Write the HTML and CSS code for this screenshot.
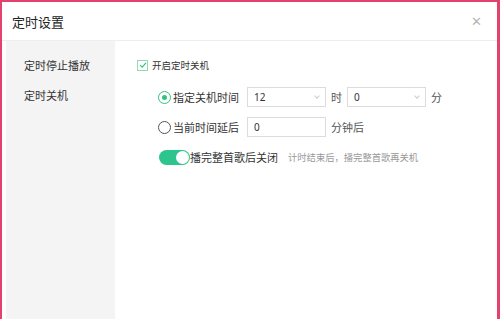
FILE: index.html
```html
<!DOCTYPE html>
<html lang="zh-CN">
<head>
    <meta charset="UTF-8">
    <meta name="viewport" content="width=device-width, initial-scale=1.0">
    <title>定时设置</title>
    <link rel="stylesheet" href="styles.css">
</head>
<body>
    <div class="dialog">
        <header class="dialog-head">
            <h1>定时设置</h1>
            <span class="close">&#x2715;</span>
        </header>
        <div class="dialog-body">
            <nav class="side">
                <a class="side-item">定时停止播放</a>
                <a class="side-item">定时关机</a>
            </nav>
            <div class="main">
                <label class="check-row">
                    <span class="checkbox">
                        <svg width="8" height="8" viewBox="0 0 8 8"><path d="M1 4.2 L3.2 6.2 L7 1.8" fill="none" stroke="#31c27c" stroke-width="1.1"/></svg>
                    </span>
                    开启定时关机
                </label>
                <div class="options">
                    <div class="opt-row">
                        <span class="radio on"></span>
                        <span class="opt-label">指定关机时间</span>
                        <div class="select"><span>12</span><i class="arrow"></i></div>
                        <span class="unit">时</span>
                        <div class="select"><span>0</span><i class="arrow"></i></div>
                        <span class="unit">分</span>
                    </div>
                    <div class="opt-row">
                        <span class="radio"></span>
                        <span class="opt-label">当前时间延后</span>
                        <div class="select"><span>0</span></div>
                        <span class="unit">分钟后</span>
                    </div>
                    <div class="opt-row">
                        <span class="toggle"><i></i></span>
                        <span class="opt-label">播完整首歌后关闭</span>
                        <span class="hint">计时结束后，播完整首歌再关机</span>
                    </div>
                </div>
            </div>
        </div>
    </div>
</body>
</html>
```

FILE: styles.css
```css
body {
    margin: 0;
    padding: 0;
    font-family: "Noto Sans CJK SC", "Noto Sans", sans-serif;
    color: #333;
    background-color: #fff;
}
.dialog {
    width: 500px;
    height: 319px;
    box-sizing: border-box;
    border: 2px solid #e4416f;
    border-right-width: 3px;
    border-bottom: none;
    display: flex;
    flex-direction: column;
    background-color: #fff;
}
.dialog-head {
    height: 38px;
    border-bottom: 1px solid #eee;
    display: flex;
    align-items: center;
    justify-content: space-between;
    padding: 0 15px 0 10px;
}
.dialog-head h1 {
    margin: 0;
    font-size: 13px;
    font-weight: normal;
    color: #222;
}
.close {
    color: #b5b5b5;
    font-size: 13px;
    margin-top: -2px;
}
.dialog-body {
    flex: 1;
    display: flex;
    padding-left: 4px;
}
.side {
    width: 109px;
    background-color: #f4f4f4;
    display: flex;
    flex-direction: column;
    padding-top: 9px;
}
.side-item {
    font-size: 11px;
    line-height: 30px;
    padding-left: 18px;
    color: #333;
}
.main {
    flex: 1;
    padding: 16px 0 0 22px;
}
.check-row {
    display: flex;
    align-items: center;
    font-size: 9.5px;
    color: #333;
    height: 16px;
}
.checkbox {
    width: 9px;
    height: 9px;
    border: 1px solid #8fd9b6;
    display: flex;
    align-items: center;
    justify-content: center;
    margin-right: 4px;
}
.options {
    padding: 14px 0 0 21px;
    display: flex;
    flex-direction: column;
    gap: 10px;
}
.opt-row {
    display: flex;
    align-items: center;
    height: 20px;
}
.radio {
    width: 11px;
    height: 11px;
    border: 1px solid #555;
    border-radius: 50%;
    box-sizing: content-box;
    margin-right: 2px;
    position: relative;
}
.radio.on {
    border-color: #31c27c;
}
.radio.on::after {
    content: "";
    position: absolute;
    left: 3px;
    top: 3px;
    width: 5px;
    height: 5px;
    border-radius: 50%;
    background-color: #31c27c;
}
.opt-label {
    font-size: 11px;
    color: #333;
    width: 74px;
}
.select {
    width: 79px;
    height: 20px;
    box-sizing: border-box;
    border: 1px solid #dcdcdc;
    display: flex;
    align-items: center;
    justify-content: space-between;
    padding: 0 6px;
    font-size: 10px;
    font-family: "Noto Sans", sans-serif;
    color: #333;
}
.arrow {
    width: 3px;
    height: 3px;
    border-right: 1px solid #ccc;
    border-bottom: 1px solid #ccc;
    transform: rotate(45deg);
    margin-top: -2px;
}
.unit {
    font-size: 11px;
    color: #555;
    margin: 0 5px;
}
.toggle {
    width: 31px;
    height: 15px;
    border-radius: 8px;
    background-color: #2dc48d;
    display: flex;
    justify-content: flex-end;
    align-items: center;
    padding-right: 1px;
    box-sizing: border-box;
    margin-left: 1px;
}
.toggle i {
    width: 13px;
    height: 13px;
    border-radius: 50%;
    background-color: #fff;
}
.opt-row .toggle + .opt-label {
    width: auto;
    margin-right: 10px;
}
.hint {
    font-size: 9.3px;
    color: #999;
}
```
